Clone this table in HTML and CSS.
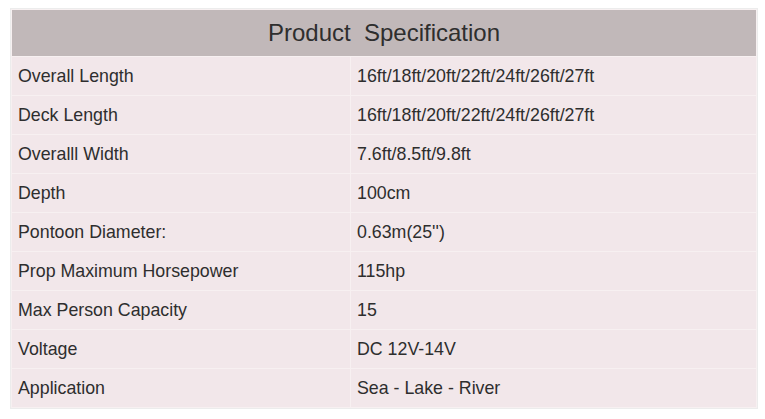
FILE: index.html
```html
<!DOCTYPE html>
<html>
<head>
<meta charset="utf-8">
<link rel="stylesheet" href="styles.css">
</head>
<body>
<table class="spec">
  <thead>
    <tr><th colspan="2">Product&nbsp; Specification</th></tr>
  </thead>
  <tbody>
    <tr><td class="k">Overall Length</td><td>16ft/18ft/20ft/22ft/24ft/26ft/27ft</td></tr>
    <tr><td class="k">Deck Length</td><td>16ft/18ft/20ft/22ft/24ft/26ft/27ft</td></tr>
    <tr><td class="k">Overalll Width</td><td>7.6ft/8.5ft/9.8ft</td></tr>
    <tr><td class="k">Depth</td><td>100cm</td></tr>
    <tr><td class="k">Pontoon Diameter:</td><td>0.63m(25'')</td></tr>
    <tr><td class="k">Prop Maximum Horsepower</td><td>115hp</td></tr>
    <tr><td class="k">Max Person Capacity</td><td>15</td></tr>
    <tr><td class="k">Voltage</td><td>DC 12V-14V</td></tr>
    <tr><td class="k">Application</td><td>Sea - Lake - River</td></tr>
  </tbody>
</table>
</body>
</html>
```
FILE: styles.css
```css
html, body {
  margin: 0;
  padding: 0;
  background: #ffffff;
}
body {
  padding: 8px 0 0 10px;
  font-family: "Liberation Sans", Arial, sans-serif;
  color: #2e2e2e;
}
.spec {
  width: 748px;
  border-collapse: separate;
  border-spacing: 1px;
  background: #f7f0f1;
  border: 1px solid #ececec;
}
.spec th {
  background: #c1b8b9;
  font-weight: normal;
  font-size: 24px;
  height: 46px;
  padding: 0;
  text-align: center;
  color: #2e2e2e;
  box-sizing: border-box;
}
.spec td {
  background: #f2e7ea;
  font-size: 17.8px;
  height: 38px;
  padding: 0 6px;
  box-sizing: border-box;
  vertical-align: middle;
}
.spec td.k {
  width: 338px;
}
```
